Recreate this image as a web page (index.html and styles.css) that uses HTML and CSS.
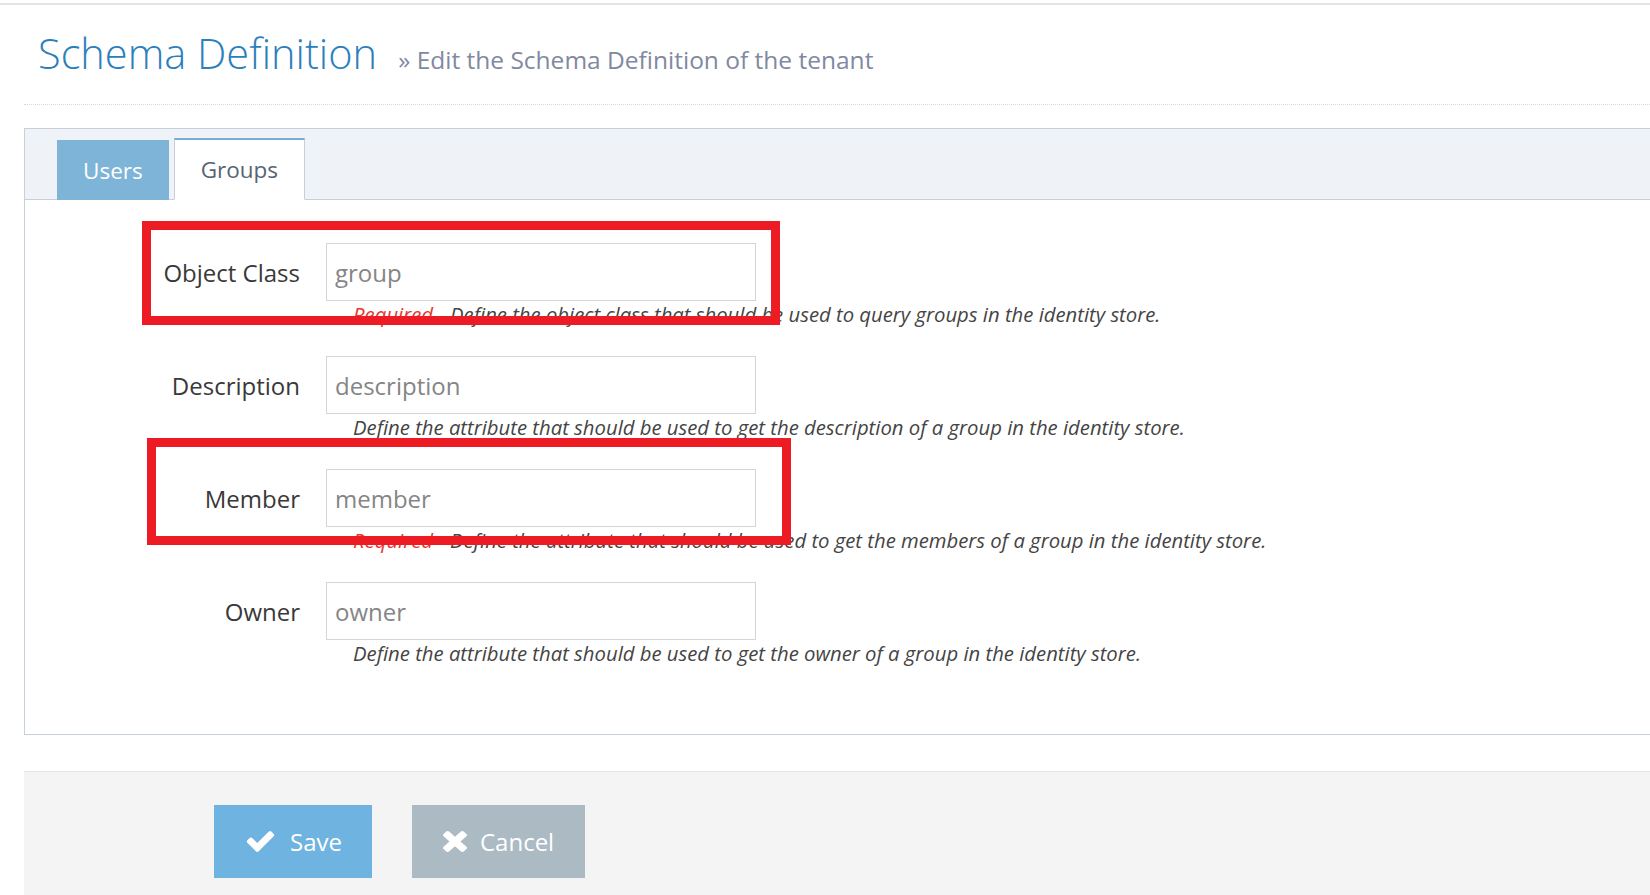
FILE: index.html
```html
<!DOCTYPE html>
<html lang="en">
<head>
<meta charset="utf-8">
<title>Schema Definition</title>
<link rel="stylesheet" href="styles.css">
</head>
<body>
<div class="topline"></div>
<div class="main">
  <div class="page-header">
    <h1 class="title">Schema Definition</h1>
    <span class="subtitle">&raquo; Edit the Schema Definition of the tenant</span>
  </div>

  <div class="tabbable">
    <ul class="tabs">
      <li class="tab">Users</li>
      <li class="tab active">Groups</li>
    </ul>
    <div class="panel">
      <form class="form">
        <div class="group">
          <div class="row">
            <label class="label">Object Class</label>
            <input class="input" type="text" value="group">
          </div>
          <div class="help"><span class="req">Required</span>Define the object class that should be used to query groups in the identity store.</div>
        </div>
        <div class="group">
          <div class="row">
            <label class="label">Description</label>
            <input class="input" type="text" value="description">
          </div>
          <div class="help">Define the attribute that should be used to get the description of a group in the identity store.</div>
        </div>
        <div class="group">
          <div class="row">
            <label class="label">Member</label>
            <input class="input" type="text" value="member">
          </div>
          <div class="help"><span class="req">Required</span>Define the attribute that should be used to get the members of a group in the identity store.</div>
        </div>
        <div class="group">
          <div class="row">
            <label class="label">Owner</label>
            <input class="input" type="text" value="owner">
          </div>
          <div class="help">Define the attribute that should be used to get the owner of a group in the identity store.</div>
        </div>
      </form>
    </div>
  </div>

  <div class="actions">
    <button class="btn btn-save" type="button">
      <svg class="ico ico-check" viewBox="121 334 1550 1188" aria-hidden="true"><path d="M1671 566q0 40-28 68l-724 724-136 136q-28 28-68 28t-68-28l-136-136-362-362q-28-28-28-68t28-68l136-136q28-28 68-28t68 28l294 295 656-657q28-28 68-28t68 28l136 136q28 28 28 68z"/></svg>
      <span>Save</span>
    </button>
    <button class="btn btn-cancel" type="button">
      <svg class="ico ico-x" viewBox="110 366 1188 1188" preserveAspectRatio="none" aria-hidden="true"><path d="M1298 1322q0 40-28 68l-136 136q-28 28-68 28t-68-28l-294-294-294 294q-28 28-68 28t-68-28l-136-136q-28-28-28-68t28-68l294-294-294-294q-28-28-28-68t28-68l136-136q28-28 68-28t68 28l294 294 294-294q28-28 68-28t68 28l136 136q28 28 28 68t-28 68l-294 294 294 294q28 28 28 68z"/></svg>
      <span>Cancel</span>
    </button>
  </div>
</div>

<div class="annot annot-1"></div>
<div class="annot annot-2"></div>
</body>
</html>
```

FILE: styles.css
```css
html, body {
  margin: 0;
  padding: 0;
  background: #ffffff;
  overflow: hidden;
  height: 100%;
}

body {
  font-family: "Open Sans", "Noto Sans", "Liberation Sans", sans-serif;
  color: #393939;
  position: relative;
}

.topline {
  height: 2px;
  margin-top: 3px;
  background: #e3e3e3;
}

.main {
  margin-left: 24px;
  width: calc(100% + 40px);
}

.page-header {
  padding: 27px 0 30px 14px;
  border-bottom: 1px dotted #d8d8d8;
  white-space: nowrap;
  line-height: 1;
}

.title {
  display: inline;
  margin: 0;
  font-size: 41.5px;
  font-weight: 300;
  line-height: 42px;
  color: #2c7fbd;
}

.subtitle {
  margin-left: 17px;
  font-size: 24.5px;
  color: #8089a0;
}

.tabbable {
  margin-top: 23px;
}

.tabs {
  list-style: none;
  margin: 0;
  padding: 11px 0 0 32px;
  height: 72px;
  box-sizing: border-box;
  display: flex;
  align-items: flex-end;
  gap: 5px;
  background: #eff3f8;
  border-top: 1px solid #c5d0dc;
  border-left: 1px solid #c5d0dc;
  border-bottom: 1px solid #c5d0dc;
}

.tab {
  height: 60px;
  box-sizing: border-box;
  margin-bottom: -1px;
  padding: 0 25px;
  display: flex;
  align-items: center;
  font-size: 22.5px;
  background: #7db4d8;
  color: #ffffff;
  border: 1px solid #7db4d8;
}

.tab.active {
  height: 62px;
  padding: 0 26px;
  background: #ffffff;
  color: #576373;
  border: 1px solid #c5d0dc;
  border-top: 2px solid #78aed6;
  border-bottom-color: #ffffff;
}

.panel {
  border-left: 1px solid #c5d0dc;
  border-bottom: 1px solid #c5d0dc;
  height: 535px;
  box-sizing: border-box;
  padding-top: 43px;
}

.group {
  margin-bottom: 29px;
}

.row {
  display: flex;
  align-items: center;
  gap: 26px;
}

.label {
  width: 275px;
  text-align: right;
  font-size: 24px;
  color: #393939;
}

.input {
  width: 430px;
  height: 58px;
  box-sizing: border-box;
  border: 1px solid #d5d5d5;
  padding: 0 8px;
  margin: 0;
  font-family: inherit;
  font-size: 24px;
  color: #858585;
  background: #ffffff;
  outline: none;
}

.help {
  margin: 1px 0 0 328px;
  height: 25px;
  line-height: 25px;
  font-size: 20.3px;
  font-style: italic;
  color: #444444;
  white-space: nowrap;
}

.req {
  color: #e8352d;
  margin-right: 17px;
}

.actions {
  margin-top: 36px;
  border-top: 1px solid #e5e5e5;
  background: #f4f4f4;
  height: 124px;
  box-sizing: border-box;
  padding: 33px 0 0 190px;
  display: flex;
  align-items: flex-start;
  gap: 40px;
}

.btn {
  height: 73px;
  display: flex;
  align-items: center;
  border: 0;
  margin: 0;
  font-family: inherit;
  font-size: 24px;
  color: #ffffff;
  cursor: pointer;
}

.btn-save {
  background: #6fb3e0;
  padding: 0 30px 0 32px;
  gap: 15px;
}

.btn-cancel {
  background: #abbac3;
  padding: 0 31px 0 31px;
  gap: 13px;
}

.ico {
  fill: #ffffff;
  display: block;
}

.ico-check {
  width: 29px;
  height: 21px;
}

.ico-x {
  width: 24px;
  height: 21px;
}

.annot {
  position: absolute;
  border: 9px solid #ed1c24;
  box-sizing: border-box;
  pointer-events: none;
}

.annot-1 {
  left: 142px;
  top: 221px;
  width: 638px;
  height: 104px;
}

.annot-2 {
  left: 147px;
  top: 438px;
  width: 644px;
  height: 107px;
}
```
